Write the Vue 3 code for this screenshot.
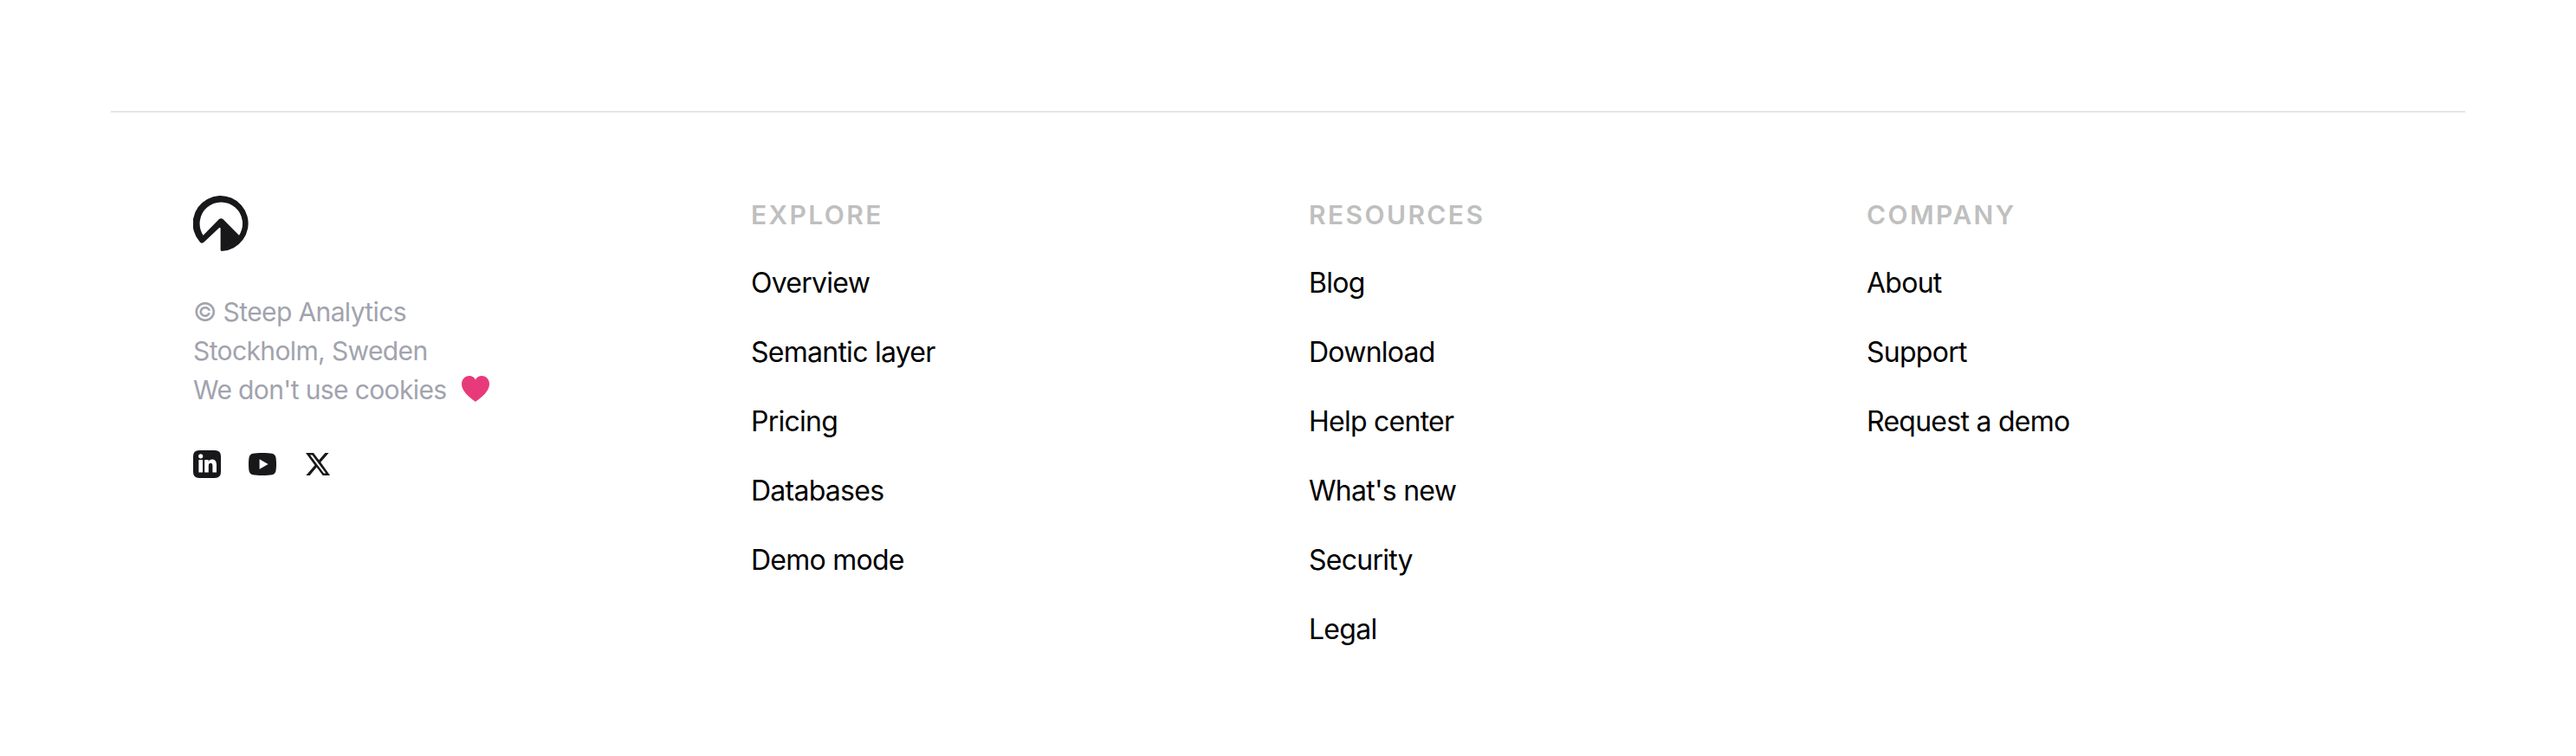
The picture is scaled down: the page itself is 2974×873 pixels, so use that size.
<template>
  <footer class="footer">
    <div class="footer-inner">
      <!-- Brand, address and social links -->
      <div class="brand">
        <a href="#" class="logo" aria-label="Steep">
          <svg viewBox="0 0 64 64" fill="currentColor">
            <path
              fill-rule="evenodd"
              d="M31.6 62.6V38.4Q31.6 35.6 29.6 37.5L12.6 53.6Q10 56 7.6 53.2A32 32 0 1 1 33 64Q31.6 64 31.6 62.6ZM11.6 45.7L29.7 27.3Q32.2 25 34.7 27.3L53 45.7A24.7 24.7 0 1 0 11.6 45.7Z"
            />
          </svg>
        </a>

        <div class="brand-text">
          <span>© Steep Analytics</span>
          <span>Stockholm, Sweden</span>
          <span class="cookies">
            We don't use cookies
            <svg class="heart" viewBox="0 0 32 30">
              <path
                d="M16 30C14 28.4 0 19.5 0 9.6C0 4 4 0 8.8 0C12 0 14.6 1.6 16 4.4C17.4 1.6 20 0 23.2 0C28 0 32 4 32 9.6C32 19.5 18 28.4 16 30Z"
              />
            </svg>
          </span>
        </div>

        <div class="socials">
          <a href="#" aria-label="LinkedIn">
            <svg viewBox="0 0 32 32" fill="currentColor">
              <path
                fill-rule="evenodd"
                d="M7 0H25Q32 0 32 7V25Q32 32 25 32H7Q0 32 0 25V7Q0 0 7 0ZM6.4 11V25.4H11V11ZM8.7 4.2A2.6 2.6 0 1 0 8.7 9.4A2.6 2.6 0 1 0 8.7 4.2ZM13.2 11V25.4H17.8V18.2C17.8 16 18.4 14.7 20.1 14.7C21.9 14.7 22.4 16.2 22.4 18.2V25.4H27V17.2C27 13.2 25.6 10.6 21.7 10.6C19.6 10.6 18.3 11.7 17.7 12.9V11Z"
              />
            </svg>
          </a>
          <a href="#" aria-label="YouTube">
            <svg viewBox="0 0 32 32" fill="currentColor">
              <path
                fill-rule="evenodd"
                d="M16 3C20.5 3 25 3.2 27 3.7C29.5 4.2 30.9 5.8 31.4 8C32.2 12 32.2 20 31.4 24C30.9 26.2 29.5 27.8 27 28.3C25 28.8 20.5 29 16 29C11.5 29 7 28.8 5 28.3C2.5 27.8 1.1 26.2 0.6 24C-0.2 20 -0.2 12 0.6 8C1.1 5.8 2.5 4.2 5 3.7C7 3.2 11.5 3 16 3ZM12.6 10.2V21.8L22.6 16Z"
              />
            </svg>
          </a>
          <a href="#" aria-label="X">
            <svg viewBox="0 0 32 32" fill="currentColor">
              <path
                fill-rule="evenodd"
                d="M2 3H11L17.2 11.3L24.4 3H28.6L19.2 13.8L30 29H21.6L14.6 19.6L6.6 29H2.3L12.4 17.3ZM7 5.4L22.8 26.5H25.2L9.5 5.4Z"
              />
            </svg>
          </a>
        </div>
      </div>

      <!-- Link columns -->
      <nav v-for="column in columns" :key="column.title" class="column">
        <h3>{{ column.title }}</h3>
        <ul>
          <li v-for="link in column.links" :key="link">
            <a href="#">{{ link }}</a>
          </li>
        </ul>
      </nav>
    </div>
  </footer>
</template>

<script setup>
const columns = [
  {
    title: "Explore",
    links: ["Overview", "Semantic layer", "Pricing", "Databases", "Demo mode"],
  },
  {
    title: "Resources",
    links: ["Blog", "Download", "Help center", "What's new", "Security", "Legal"],
  },
  {
    title: "Company",
    links: ["About", "Support", "Request a demo"],
  },
];
</script>

<style>
body {
  background-color: #ffffff;
}
</style>

<style scoped>
.footer {
  box-sizing: border-box;
  min-height: 873px;
  padding: 128px 128px 0;
  font-family: Inter, "Liberation Sans", sans-serif;
  color: #000000;
}

.footer-inner {
  display: grid;
  grid-template-columns: repeat(4, 644px);
  padding: 96px 0 0 95px;
  border-top: 2px solid #e2e5ea;
}

.footer a {
  color: inherit;
  text-decoration: none;
}

.logo {
  display: block;
  width: 64px;
  height: 64px;
}

.logo svg,
.socials svg {
  display: block;
  width: 100%;
  height: 100%;
}

.brand {
  color: #18181b;
}

.brand-text {
  display: flex;
  flex-direction: column;
  margin-top: 48px;
  font-size: 30px;
  line-height: 45px;
  letter-spacing: -0.62px;
  color: #a1a3ae;
}

.cookies {
  display: flex;
  align-items: center;
  gap: 17px;
}

.heart {
  width: 32px;
  height: 30px;
  margin-bottom: 4px;
  fill: #e83a7a;
}

.socials {
  display: flex;
  gap: 32px;
  margin-top: 47px;
}

.socials a {
  width: 32px;
  height: 32px;
}

.column h3 {
  margin: 0 0 32px;
  font-size: 30px;
  font-weight: 600;
  line-height: 45px;
  letter-spacing: 2.4px;
  text-transform: uppercase;
  color: #bfbfbf;
}

.column ul {
  display: flex;
  flex-direction: column;
  gap: 32px;
  margin: 0;
  padding: 0;
  list-style: none;
}

.column li {
  font-size: 32px;
  line-height: 48px;
  letter-spacing: -0.74px;
}
</style>
